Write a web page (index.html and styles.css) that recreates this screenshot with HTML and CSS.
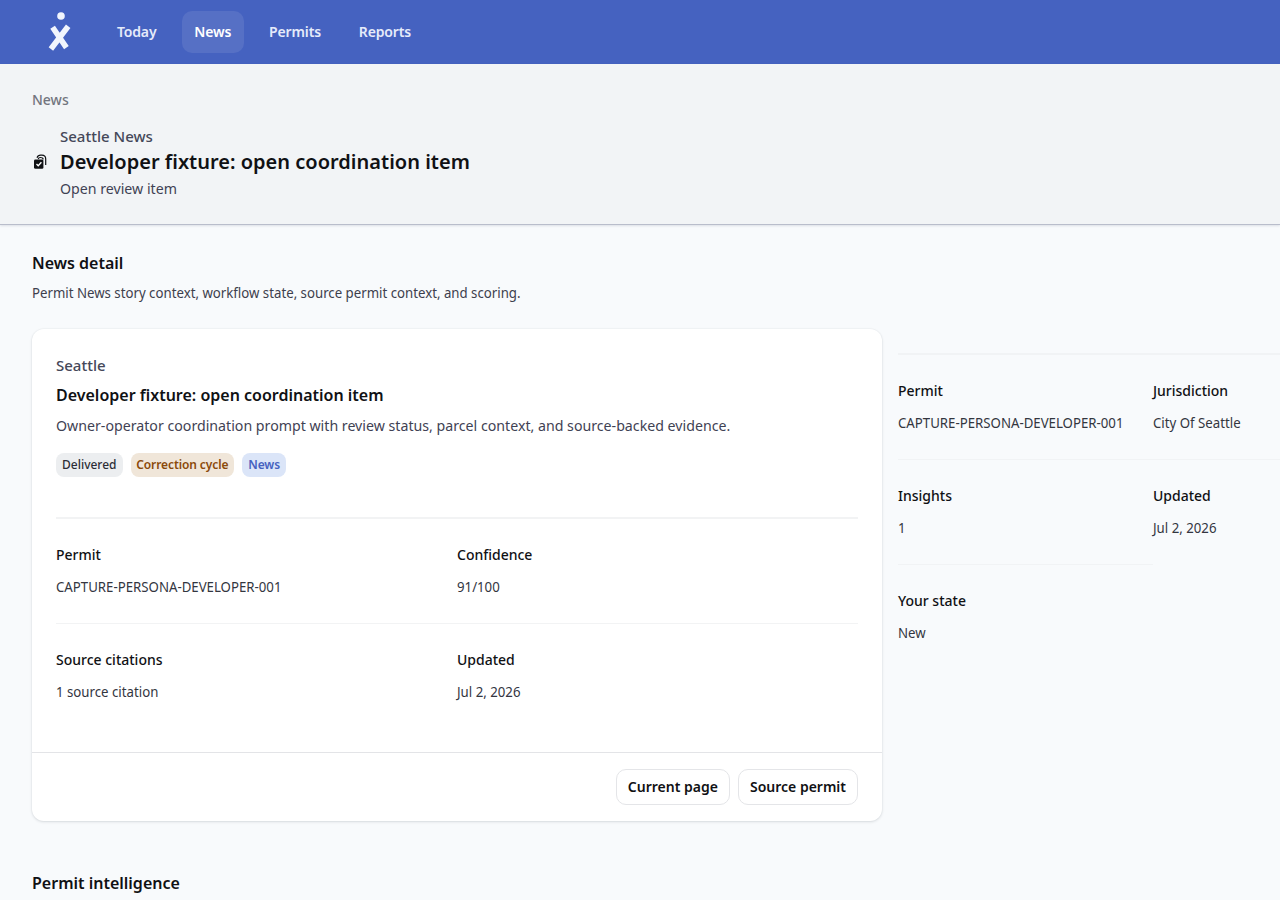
FILE: index.html
```html
<!DOCTYPE html>
<html lang="en">
<head>
<meta charset="utf-8">
<title>Seattle News</title>
<link rel="stylesheet" href="styles.css">
</head>
<body>
<header class="topbar">
  <svg class="logo" width="24" height="40" viewBox="0 0 24 40" aria-label="Home"><circle cx="13" cy="4" r="3.8" fill="#f1f5fd"/><path d="M4.6 15.2 18.4 35.6M20.2 14.2 2.9 37" stroke="#f1f5fd" stroke-width="5.6" fill="none"/></svg>
  <nav class="nav">
    <a class="nav-link">Today</a>
    <a class="nav-link active">News</a>
    <a class="nav-link">Permits</a>
    <a class="nav-link">Reports</a>
  </nav>
</header>
<section class="page-head">
  <div class="crumb">News</div>
  <div class="title-row">
    <svg class="title-icon" width="16" height="16" viewBox="0 0 16 16"><path d="M5 3.7C5.7 2 7 1.2 8.6 1.2h1.2c2.5 0 3.9 1.4 3.9 3.9v6" fill="none" stroke="#101114" stroke-width="1.2"/><path d="M6.2 5c.3-1 1-1.5 2-1.5s2.8.5 3.1 1.8" fill="none" stroke="#101114" stroke-width="1.2"/><rect x="2" y="5.4" width="9.4" height="9.4" rx="1.4" fill="#101114"/><path d="m4.5 10 1.7 1.7 3.2-3.5" fill="none" stroke="#fff" stroke-width="1.4"/></svg>
    <div class="titles">
      <div class="eyebrow">Seattle News</div>
      <h1>Developer fixture: open coordination item</h1>
      <div class="subtitle">Open review item</div>
    </div>
  </div>
</section>
<main class="content">
  <h2>News detail</h2>
  <p class="lead">Permit News story context, workflow state, source permit context, and scoring.</p>
  <div class="columns">
    <article class="card">
      <div class="card-body">
        <div class="place">Seattle</div>
        <h3>Developer fixture: open coordination item</h3>
        <p class="summary">Owner-operator coordination prompt with review status, parcel context, and source-backed evidence.</p>
        <div class="badges">
          <span class="badge">Delivered</span>
          <span class="badge warn">Correction cycle</span>
          <span class="badge info">News</span>
        </div>
        <dl class="facts">
          <div class="fact"><dt>Permit</dt><dd>CAPTURE-PERSONA-DEVELOPER-001</dd></div>
          <div class="fact"><dt>Confidence</dt><dd>91/100</dd></div>
          <div class="fact"><dt>Source citations</dt><dd>1 source citation</dd></div>
          <div class="fact"><dt>Updated</dt><dd>Jul 2, 2026</dd></div>
        </dl>
      </div>
      <footer class="card-foot"><button>Current page</button><button>Source permit</button></footer>
    </article>
    <aside class="side">
      <dl class="facts">
        <div class="fact"><dt>Permit</dt><dd>CAPTURE-PERSONA-DEVELOPER-001</dd></div>
        <div class="fact"><dt>Jurisdiction</dt><dd>City Of Seattle</dd></div>
        <div class="fact"><dt>Insights</dt><dd>1</dd></div>
        <div class="fact"><dt>Updated</dt><dd>Jul 2, 2026</dd></div>
        <div class="fact"><dt>Your state</dt><dd>New</dd></div>
      </dl>
    </aside>
  </div>
  <h2 class="next">Permit intelligence</h2>
</main>
</body>
</html>
```
FILE: styles.css
```css
* { box-sizing: border-box; }
html { overflow: hidden; }
body { margin: 0; height: 900px; overflow: hidden; background: #f8fafc; color: #101114; font-family: "Noto Sans", sans-serif; font-size: 14px; line-height: 20px; }
h1, h2, h3, p, dl, dd { margin: 0; }
.topbar { display: flex; align-items: center; height: 64px; padding-left: 48px; background: #4562c0; }
.logo { display: block; margin-top: -1px; }
.nav { display: flex; gap: 12.4px; margin-left: 32.2px; }
.nav-link { display: flex; align-items: center; height: 42px; padding: 0 12.7px; border-radius: 10px; color: #e5ebfa; font-weight: 600; letter-spacing: -.13px; }
.nav-link.active { background: #5670c5; color: #fff; }
.page-head { height: 161px; padding: 26px 32px 0; background: #f2f4f6; border-bottom: 1px solid #b9bdcb; box-shadow: 0 1px 2px rgba(30, 40, 80, .12); }
.crumb { color: #72757e; font-weight: 500; }
.title-row { display: flex; align-items: center; gap: 12px; margin-top: 15px; }
.title-icon { flex: none; }
.eyebrow { font-size: 15px; line-height: 22px; font-weight: 500; color: #454859; }
h1 { font-size: 20px; line-height: 30px; font-weight: 600; letter-spacing: .01px; }
/* Secondary text is set slightly condensed. */
.subtitle, .summary, .lead, dd { transform: scaleX(.945); transform-origin: left; }
.subtitle { font-size: 15px; line-height: 22px; color: #3f4254; }
.content { padding: 26px 0 0 32px; }
h2 { font-size: 16px; line-height: 24px; font-weight: 600; }
.lead { margin-top: 8px; color: #3d404d; }
.columns { display: grid; grid-template-columns: 850px 510px; gap: 16px; margin-top: 26px; }
.card { height: 492px; background: #fff; border-radius: 12px; box-shadow: 0 0 0 1px rgba(20, 30, 50, .02), 0 1px 3px rgba(20, 30, 50, .13); }
.card-body { height: 423px; padding: 26px 24px 0; }
.place { font-size: 15px; font-weight: 500; color: #454859; }
h3 { margin-top: 8px; font-size: 16px; line-height: 24px; font-weight: 600; }
.summary { margin-top: 8px; font-size: 15px; color: #3f4254; white-space: nowrap; }
.badges { display: flex; gap: 8px; margin-top: 18px; }
.badge { height: 24px; padding: 0 6px; border-radius: 8px; font-size: 12px; line-height: 24px; font-weight: 500; background: #eceef0; color: #2c2e37; }
.badge.warn { padding: 0 5.7px; background: #f0e6d9; color: #8b4a0a; font-weight: 600; letter-spacing: -.1px; }
.badge.info { padding: 0 6.2px; background: #dbe5f8; color: #4562c0; font-weight: 600; letter-spacing: -.1px; }
.facts { display: grid; grid-template-columns: 1fr 1fr; }
.card .facts { margin-top: 40px; }
.fact { height: 105px; padding-top: 26px; border-top: 1px solid #f2f3f4; }
.fact:nth-child(-n+2) { height: 106px; border-top-width: 2px; }
dt { font-weight: 500; }
dd { margin-top: 12px; color: #33363f; }
.side { padding-top: 24px; }
.side .fact { border-color: #f1f3f5; }
.card-foot { display: flex; justify-content: flex-end; gap: 8px; height: 69px; padding: 16px 24px; border-top: 1px solid #e3e4e7; }
button { height: 36px; padding: 0 11px; background: #fff; border: 1px solid #e4e5e8; border-radius: 10px; font: 600 14px/20px "Noto Sans", sans-serif; color: #101114; }
.next { margin-top: 50px; }
```
